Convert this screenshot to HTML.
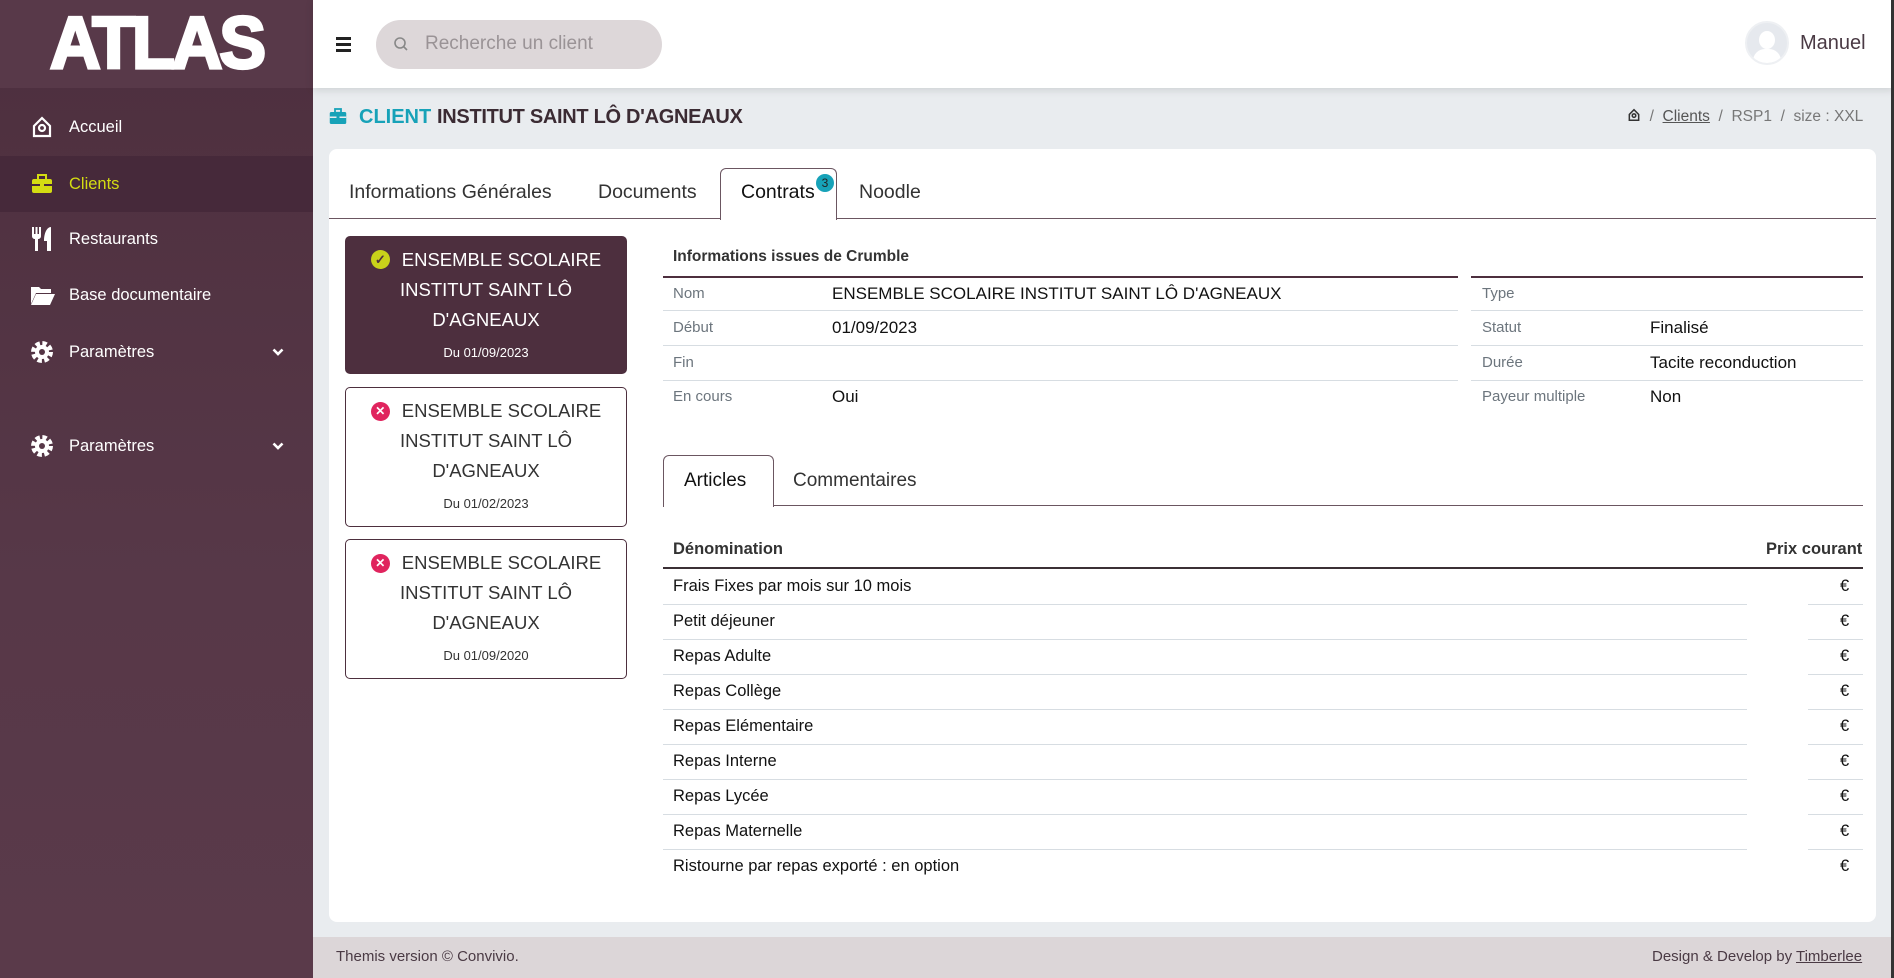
<!DOCTYPE html>
<html><head><meta charset="utf-8"><style>
*{box-sizing:border-box;margin:0;padding:0}
body{width:1894px;height:978px;overflow:hidden;font-family:"Liberation Sans",sans-serif;background:#e9ecef;position:relative;color:#212529}
.abs{position:absolute}
#side{left:0;top:0;width:313px;height:978px;background:linear-gradient(180deg,#4d2f3e 0%,#573848 60%,#5a3a4a 100%)}
#logoBg{left:0;top:0;width:313px;height:88px;background:#583949}
#logo{left:0;top:8px;width:313px;height:70px;color:#fff;font:bold 70px/70px "Liberation Sans",sans-serif;text-align:center;letter-spacing:-3px;-webkit-text-stroke:3px #fff;transform:scaleY(1.05)}
.mi{position:absolute;left:0;width:313px;height:56px;color:#fff;font-size:16.5px;display:flex;align-items:center}
.mi svg{position:absolute;left:30px}
.mi span{position:absolute;left:69px}
.mi svg.chev{left:272px}
#top{left:313px;top:0;width:1581px;height:88px;background:#fff;box-shadow:0 2px 8px rgba(0,0,0,.12)}
#card{left:329px;top:149px;width:1547px;height:773px;background:#fff;border-radius:8px}
.tab{position:absolute;top:181px;font-size:19.5px;color:#333}
.cc{position:absolute;left:345px;width:282px;border:1px solid #4d2f3e;border-radius:5px;text-align:center;font-size:18.5px;line-height:30px;color:#333;padding-top:8px}
.cc .d{font-size:13px;line-height:20px;margin-top:8px}
.lab{position:absolute;font-size:15px;color:#6c757d}
.val{position:absolute;font-size:17px;color:#111}
.hl{position:absolute;height:1px;background:#d7dde2}
.row{position:absolute;left:673px;font-size:16.5px;color:#111}
.eur{position:absolute;left:1840px;font-size:16.5px;color:#111}
</style></head><body>
<div id="side" class="abs">
<div id="logoBg" class="abs"></div>
<div id="logo" class="abs">ATLAS</div>
<div class="mi" style="top:99px"><svg width="24" height="24" viewBox="0 0 24 24" fill="none" stroke="#fff" stroke-width="2.2"><path d="M4 11 L12 3 L20 11 V21 H4 Z"/><circle cx="12" cy="13" r="3"/></svg><span>Accueil</span></div>
<div class="mi" style="top:156px;background:#46293a;color:#d4dc12"><svg width="24" height="24" viewBox="0 0 24 24"><rect x="2" y="7" width="20" height="14" rx="2" fill="#d4dc12"/><rect x="8" y="3" width="8" height="5" fill="none" stroke="#d4dc12" stroke-width="2"/><rect x="2" y="12" width="20" height="2" fill="#46293a"/><rect x="10" y="11" width="4" height="4" fill="#d4dc12"/></svg><span>Clients</span></div>
<div class="mi" style="top:211px"><svg width="24" height="26" viewBox="0 0 24 26" fill="#fff"><path d="M2 1h2v7h1.5V1h2v7H9V1h2v9c0 2-1.5 3-3 3v12H5V13c-1.5 0-3-1-3-3z"/><path d="M14 15c0-8 3-14 7-14v24h-4V15z"/></svg><span>Restaurants</span></div>
<div class="mi" style="top:267px"><svg width="26" height="22" viewBox="0 0 26 22" fill="#fff"><path d="M1 3h8l2 2h10v4H6L1 20z"/><path d="M6 10h19l-5 11H1z"/></svg><span>Base documentaire</span></div>
<div class="mi" style="top:324px"><svg width="24" height="24" viewBox="0 0 24 24"><circle cx="12" cy="12" r="8" fill="none" stroke="#fff" stroke-width="6" stroke-dasharray="4 2.3"/><circle cx="12" cy="12" r="7" fill="#fff"/><circle cx="12" cy="12" r="3" fill="#553545"/></svg><span>Paramètres</span><svg class="chev" width="12" height="10" viewBox="0 0 12 10"><path d="M1.5 2.5 L6 7 L10.5 2.5" fill="none" stroke="#fff" stroke-width="2.6"/></svg></div>
<div class="mi" style="top:418px"><svg width="24" height="24" viewBox="0 0 24 24"><circle cx="12" cy="12" r="8" fill="none" stroke="#fff" stroke-width="6" stroke-dasharray="4 2.3"/><circle cx="12" cy="12" r="7" fill="#fff"/><circle cx="12" cy="12" r="3" fill="#573848"/></svg><span>Paramètres</span><svg class="chev" width="12" height="10" viewBox="0 0 12 10"><path d="M1.5 2.5 L6 7 L10.5 2.5" fill="none" stroke="#fff" stroke-width="2.6"/></svg></div>
</div>
<div id="top" class="abs">
<div class="abs" style="left:23px;top:37px;width:15px;height:2.5px;background:#222;box-shadow:0 6px 0 #222,0 12px 0 #222"></div>
<div class="abs" style="left:63px;top:20px;width:286px;height:49px;border-radius:25px;background:#ddd7d9"></div>
<svg class="abs" style="left:80px;top:36px" width="16" height="16" viewBox="0 0 16 16" fill="none" stroke="#888" stroke-width="1.6"><circle cx="7" cy="7" r="5"/><path d="M11 11l3 3"/></svg>
<div class="abs" style="left:112px;top:33px;font-size:19px;color:#9a9396">Recherche un client</div>
<div class="abs" style="left:1432px;top:21px;width:44px;height:44px;border-radius:50%;background:#e6e9ee;border:2px solid #eef0f3;overflow:hidden"><div class="abs" style="left:12px;top:8px;width:16px;height:18px;border-radius:50%;background:#fff"></div><div class="abs" style="left:6px;top:26px;width:28px;height:20px;border-radius:12px 12px 0 0;background:#fff"></div></div>
<div class="abs" style="left:1487px;top:32px;font-size:20px;color:#4a3a44">Manuel</div>
</div>
<svg class="abs" style="left:329px;top:108px" width="18" height="17" viewBox="0 0 24 22"><rect x="1" y="5" width="22" height="16" rx="2" fill="#17a2b8"/><rect x="8" y="1" width="8" height="5" fill="none" stroke="#17a2b8" stroke-width="2.4"/><rect x="1" y="11" width="22" height="2" fill="#e9ecef"/><rect x="10" y="10" width="4" height="4" fill="#17a2b8"/></svg>
<div class="abs" style="left:359px;top:106px;font-size:20px;color:#17a2b8;font-weight:bold">CLIENT</div>
<div class="abs" style="left:437px;top:106px;font-size:20px;color:#3b2b33;font-weight:bold;letter-spacing:-.3px">INSTITUT SAINT LÔ D'AGNEAUX</div>
<div class="abs" style="left:1627px;top:108px;font-size:15.5px;color:#777;white-space:nowrap"><svg width="14" height="14" viewBox="0 0 24 24" fill="none" stroke="#333" stroke-width="2.6" style="vertical-align:-1px"><path d="M4 11 L12 3 L20 11 V21 H4 Z"/><circle cx="12" cy="13" r="3"/></svg> &nbsp;/&nbsp; <u style="color:#555">Clients</u> &nbsp;/&nbsp; RSP1 &nbsp;/&nbsp; size : XXL</div>
<div id="card" class="abs"></div>
<div class="abs" style="left:329px;top:218px;width:1547px;height:1px;background:#6b5661"></div>
<div class="abs" style="left:720px;top:168px;width:117px;height:52px;background:#fff;border:1px solid #6b5661;border-bottom:none;border-radius:6px 6px 0 0"></div>
<div class="tab" style="left:349px">Informations Générales</div>
<div class="tab" style="left:598px">Documents</div>
<div class="tab" style="left:741px;color:#111">Contrats</div>
<div class="abs" style="left:816px;top:174px;width:18px;height:18px;border-radius:50%;background:#17a2b8;color:#222;font-size:12px;text-align:center;line-height:18px">3</div>
<div class="tab" style="left:859px">Noodle</div>
<div class="cc" style="top:236px;height:138px;background:#4d2f3e;color:#fff"><span style="display:inline-block;width:19px;height:19px;border-radius:50%;background:#c9d21a;color:#4d2f3e;font-size:13px;line-height:19px;vertical-align:2px;margin-right:12px;font-weight:bold">✓</span>ENSEMBLE SCOLAIRE<br>INSTITUT SAINT LÔ<br>D'AGNEAUX<div class="d">Du 01/09/2023</div></div>
<div class="cc" style="top:387px;height:140px"><span style="display:inline-block;width:19px;height:19px;border-radius:50%;background:#e0245e;color:#fff;font-size:12px;line-height:19px;vertical-align:2px;margin-right:12px;font-weight:bold">✕</span>ENSEMBLE SCOLAIRE<br>INSTITUT SAINT LÔ<br>D'AGNEAUX<div class="d">Du 01/02/2023</div></div>
<div class="cc" style="top:539px;height:140px"><span style="display:inline-block;width:19px;height:19px;border-radius:50%;background:#e0245e;color:#fff;font-size:12px;line-height:19px;vertical-align:2px;margin-right:12px;font-weight:bold">✕</span>ENSEMBLE SCOLAIRE<br>INSTITUT SAINT LÔ<br>D'AGNEAUX<div class="d">Du 01/09/2020</div></div>
<div class="abs" style="left:673px;top:248px;font-size:15.5px;font-weight:bold;color:#333">Informations issues de Crumble</div>
<div class="abs" style="left:663px;top:276px;width:795px;height:2px;background:#4d2f3e"></div>
<div class="abs" style="left:1471px;top:276px;width:392px;height:2px;background:#4d2f3e"></div>
<div class="hl" style="left:663px;top:310px;width:795px"></div><div class="hl" style="left:663px;top:345px;width:795px"></div><div class="hl" style="left:663px;top:380px;width:795px"></div>
<div class="hl" style="left:1471px;top:310px;width:392px"></div><div class="hl" style="left:1471px;top:345px;width:392px"></div><div class="hl" style="left:1471px;top:380px;width:392px"></div>
<div class="lab" style="left:673px;top:285px">Nom</div><div class="val" style="left:832px;top:284px">ENSEMBLE SCOLAIRE INSTITUT SAINT LÔ D'AGNEAUX</div>
<div class="lab" style="left:673px;top:319px">Début</div><div class="val" style="left:832px;top:318px">01/09/2023</div>
<div class="lab" style="left:673px;top:354px">Fin</div>
<div class="lab" style="left:673px;top:388px">En cours</div><div class="val" style="left:832px;top:387px">Oui</div>
<div class="lab" style="left:1482px;top:285px">Type</div>
<div class="lab" style="left:1482px;top:319px">Statut</div><div class="val" style="left:1650px;top:318px">Finalisé</div>
<div class="lab" style="left:1482px;top:354px">Durée</div><div class="val" style="left:1650px;top:353px">Tacite reconduction</div>
<div class="lab" style="left:1482px;top:388px">Payeur multiple</div><div class="val" style="left:1650px;top:387px">Non</div>
<div class="abs" style="left:663px;top:505px;width:1200px;height:1px;background:#6b5661"></div>
<div class="abs" style="left:663px;top:455px;width:111px;height:52px;background:#fff;border:1px solid #6b5661;border-bottom:none;border-radius:6px 6px 0 0"></div>
<div class="abs" style="left:684px;top:470px;font-size:19px;color:#111">Articles</div>
<div class="abs" style="left:793px;top:470px;font-size:19px;color:#333">Commentaires</div>
<div class="abs" style="left:673px;top:540px;font-size:16.5px;font-weight:bold;color:#333">Dénomination</div>
<div class="abs" style="left:1766px;top:540px;font-size:16.5px;font-weight:bold;color:#333">Prix courant</div>
<div class="abs" style="left:663px;top:567px;width:1200px;height:2px;background:#3b3035"></div>
<div class="row" style="top:577px">Frais Fixes par mois sur 10 mois</div>
<div class="row" style="top:612px">Petit déjeuner</div>
<div class="row" style="top:647px">Repas Adulte</div>
<div class="row" style="top:682px">Repas Collège</div>
<div class="row" style="top:717px">Repas Elémentaire</div>
<div class="row" style="top:752px">Repas Interne</div>
<div class="row" style="top:787px">Repas Lycée</div>
<div class="row" style="top:822px">Repas Maternelle</div>
<div class="row" style="top:857px">Ristourne par repas exporté : en option</div>
<div class="eur" style="top:577px">€</div><div class="eur" style="top:612px">€</div><div class="eur" style="top:647px">€</div><div class="eur" style="top:682px">€</div><div class="eur" style="top:717px">€</div><div class="eur" style="top:752px">€</div><div class="eur" style="top:787px">€</div><div class="eur" style="top:822px">€</div><div class="eur" style="top:857px">€</div>
<div class="hl" style="left:663px;top:604px;width:1084px"></div><div class="hl" style="left:1808px;top:604px;width:55px"></div>
<div class="hl" style="left:663px;top:639px;width:1084px"></div><div class="hl" style="left:1808px;top:639px;width:55px"></div>
<div class="hl" style="left:663px;top:674px;width:1084px"></div><div class="hl" style="left:1808px;top:674px;width:55px"></div>
<div class="hl" style="left:663px;top:709px;width:1084px"></div><div class="hl" style="left:1808px;top:709px;width:55px"></div>
<div class="hl" style="left:663px;top:744px;width:1084px"></div><div class="hl" style="left:1808px;top:744px;width:55px"></div>
<div class="hl" style="left:663px;top:779px;width:1084px"></div><div class="hl" style="left:1808px;top:779px;width:55px"></div>
<div class="hl" style="left:663px;top:814px;width:1084px"></div><div class="hl" style="left:1808px;top:814px;width:55px"></div>
<div class="hl" style="left:663px;top:849px;width:1084px"></div><div class="hl" style="left:1808px;top:849px;width:55px"></div>
<div class="abs" style="left:313px;top:937px;width:1581px;height:41px;background:#dcd6d8"></div>
<div class="abs" style="left:336px;top:948px;font-size:15px;color:#4a3a44">Themis version © Convivio.</div>
<div class="abs" style="left:1652px;top:948px;font-size:15px;color:#4a3a44;white-space:nowrap">Design &amp; Develop by <u>Timberlee</u></div>
<div class="abs" style="left:1891px;top:0;width:3px;height:978px;background:#333"></div>
</body></html>
